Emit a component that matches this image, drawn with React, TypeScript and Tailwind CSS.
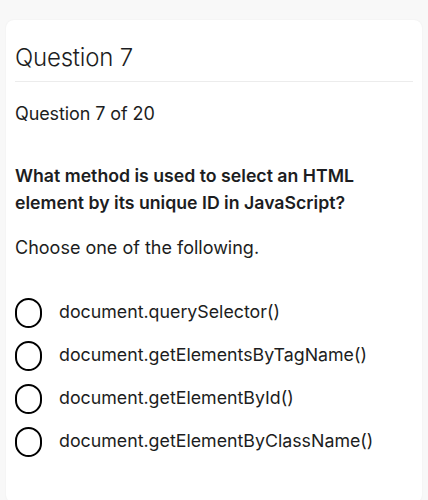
import React from "react";

const options = [
    "document.querySelector()",
    "document.getElementsByTagName()",
    "document.getElementById()",
    "document.getElementByClassName()",
];

const App = () => {
    return (
        <div className="min-h-[500px] bg-[#f8f8f8] pt-[20px] px-[6px] font-[family-name:Inter,sans-serif] text-[#1c1d21]">
            <div className="bg-white rounded-lg shadow-[0_0_2px_rgba(0,0,0,0.06)] px-[9px] pb-[40px] min-h-[480px]">
                {/* TITLE */}
                <h1 className="pt-[22px] text-[24px] leading-[32px] font-light tracking-[-0.2px]">Question 7</h1>
                <div className="mt-[7px] border-t border-[#ececec]" />
                <p className="mt-[20px] text-[18px] leading-[24px] tracking-[-0.1px]">Question 7 of 20</p>
                {/* QUESTION TEXT */}
                <p className="mt-[36px] max-w-[370px] text-[17.7px] leading-[27px] font-semibold">
                    What method is used to select an HTML element by its unique ID in JavaScript?
                </p>
                <p className="mt-[18px] text-[18px] leading-[27px]">Choose one of the following.</p>
                {/* OPTIONS */}
                <div className="mt-[30px] flex flex-col">
                    {options.map((o) => (
                        <label key={o} className="flex items-center h-[43px]">
                            <span className="w-[27px] h-[30px] rounded-full border-[2.5px] border-black shrink-0" />
                            <span className="ml-[17px] text-[17.8px]">{o}</span>
                        </label>
                    ))}
                </div>
            </div>
        </div>
    );
};

export default App;
